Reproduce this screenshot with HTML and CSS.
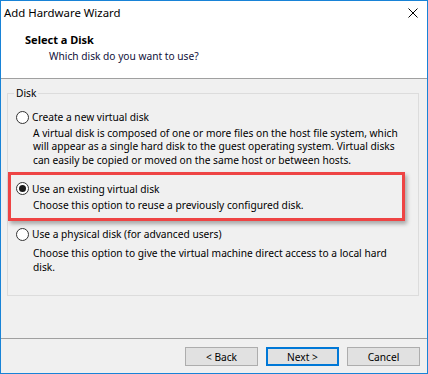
FILE: index.html
```html
<!DOCTYPE html>
<html lang="en">
<head>
    <meta charset="UTF-8">
    <title>Add Hardware Wizard</title>
    <link rel="stylesheet" href="styles.css">
</head>
<body>
    <div class="window">
        <!-- Title bar -->
        <div class="titlebar">
            <span class="title">Add Hardware Wizard</span>
            <span class="close">
                <svg width="10" height="10" viewBox="0 0 10 10">
                    <path d="M0.5 0.5 L9.5 9.5 M9.5 0.5 L0.5 9.5" stroke="#000" stroke-width="1" fill="none"/>
                </svg>
            </span>
        </div>

        <!-- Wizard page header -->
        <div class="header">
            <h1>Select a Disk</h1>
            <p class="subtitle">Which disk do you want to use?</p>
        </div>

        <div class="content">
            <fieldset class="group">
                <legend>Disk</legend>

                <div class="option">
                    <label class="choice"><span class="radio"></span>Create a new virtual disk</label>
                    <p class="desc">A virtual disk is composed of one or more files on the host file system, which will appear as a single hard disk to the guest operating system. Virtual disks can easily be copied or moved on the same host or between hosts.</p>
                </div>

                <div class="option highlight">
                    <label class="choice"><span class="radio checked"></span>Use an existing virtual disk</label>
                    <p class="desc">Choose this option to reuse a previously configured disk.</p>
                </div>

                <div class="option last">
                    <label class="choice"><span class="radio"></span>Use a physical disk (for advanced users)</label>
                    <p class="desc">Choose this option to give the virtual machine direct access to a local hard disk.</p>
                </div>
            </fieldset>
        </div>

        <div class="footer">
            <button class="btn">&lt; Back</button>
            <button class="btn default">Next &gt;</button>
            <button class="btn">Cancel</button>
        </div>
    </div>
</body>
</html>
```

FILE: styles.css
```css
/* General */
body {
    margin: 0;
    padding: 0;
    font-family: "Noto Sans", "Segoe UI", sans-serif;
    font-size: 10.2px;
    color: #000;
}

.window {
    width: 428px;
    height: 374px;
    box-sizing: border-box;
    border: 1px solid #1883d7;
    background-color: #f0f0f0;
    display: flex;
    flex-direction: column;
}

/* Title bar */
.titlebar {
    height: 24px;
    background-color: #fff;
    display: flex;
    align-items: center;
    justify-content: space-between;
    padding: 0 9px 0 3px;
}

.title {
    font-size: 11.4px;
    line-height: 24px;
}

.close {
    display: flex;
}

/* Header */
.header {
    background-color: #fff;
    height: 45px;
    padding: 8px 0 0 24px;
    border-bottom: 1px solid #a0a0a0;
}

.header h1 {
    margin: 0;
    font-size: 11px;
    font-weight: bold;
    line-height: 14px;
}

.subtitle {
    margin: 2px 0 0 24px;
    line-height: 14px;
    color: #10103a;
}

/* Group box */
.content {
    padding: 7px 8px 0 6px;
    height: 252px;
}

.group {
    margin: 0;
    border: 1px solid #dcdcdc;
    padding: 10px 13px 0 8px;
    height: 198px;
    min-width: 0;
    box-sizing: content-box;
}

.group legend {
    margin-left: -2px;
    padding: 0 2px;
    line-height: 14px;
}

.option {
    display: flex;
    flex-direction: column;
}

.choice {
    display: flex;
    align-items: center;
    gap: 3px;
    height: 14px;
    line-height: 14px;
}

.radio {
    width: 11px;
    height: 11px;
    border: 1px solid #333;
    border-radius: 50%;
    background-color: #fff;
    display: flex;
    align-items: center;
    justify-content: center;
}

.radio.checked::after {
    content: "";
    width: 7px;
    height: 7px;
    border-radius: 50%;
    background-color: #1a1a1a;
}

.desc {
    margin: 2.7px 0 0 17px;
    line-height: 13.4px;
}

/* Red annotation box */
.highlight {
    margin: 5px 0 0 -8px;
    padding: 7px 0 6px 5px;
    border: 3px solid #ee4444;
    box-shadow: 2px 3px 4px rgba(0, 0, 0, 0.3);
}

.highlight .desc {
    margin-top: 3px;
}

.last {
    margin-top: 6px;
}

.last .desc {
    margin-top: 5px;
    line-height: 14px;
}

/* Footer */
.footer {
    border-top: 1px solid #a0a0a0;
    flex: 1;
    display: flex;
    justify-content: flex-end;
    align-items: flex-start;
    gap: 8px;
    padding: 8px 7px 0 0;
}

.btn {
    width: 73px;
    height: 19px;
    padding: 0;
    background-color: #e1e1e1;
    border: 1px solid #adadad;
    font-family: "Noto Sans", "Segoe UI", sans-serif;
    font-size: 10.2px;
    color: #000;
}

.btn.default {
    border: 2px solid #0078d7;
}
```
